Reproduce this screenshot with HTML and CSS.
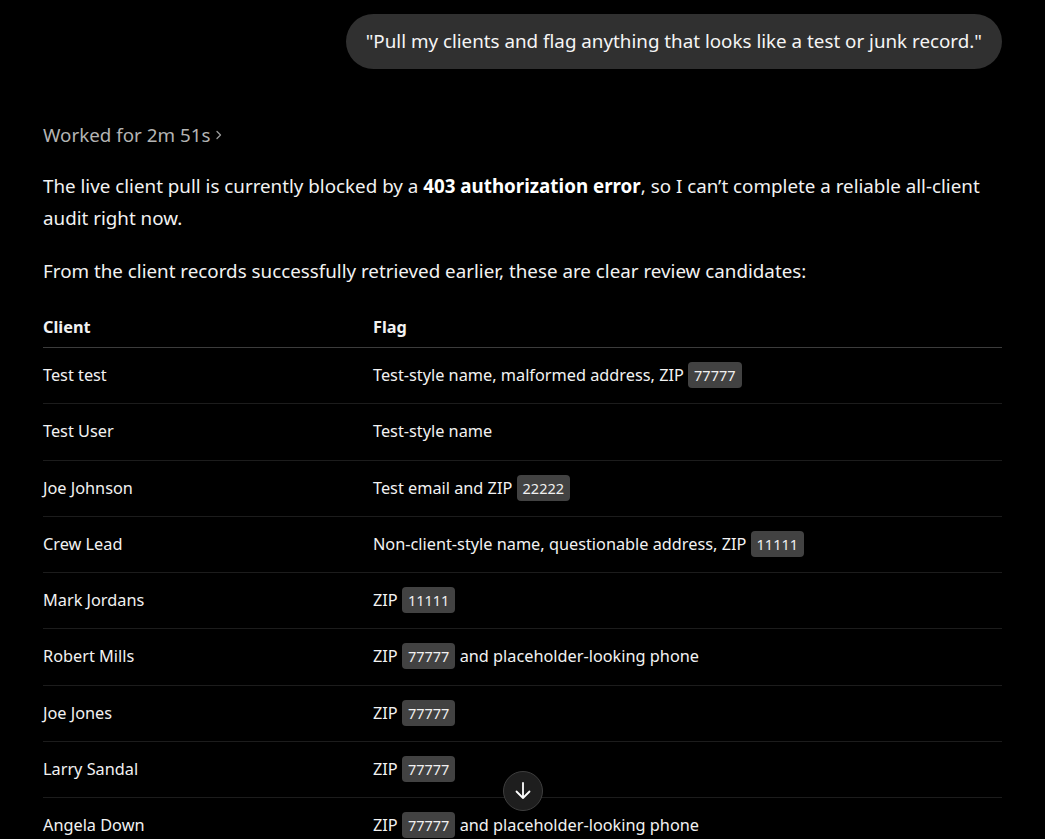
FILE: index.html
```html
<!DOCTYPE html>
<html>
<head>
    <title>Client audit</title>
    <link rel="stylesheet" href="styles.css">
</head>
<body>
    <div class="thread">
        <div class="user-row">
            <div class="bubble">"Pull my clients and flag anything that looks like a test or junk record."</div>
        </div>

        <div class="worked">
            Worked for 2m 51s
            <svg class="chev" width="10" height="12" viewBox="0 0 10 12"><path d="M3 2.5 L6.5 6 L3 9.5" fill="none" stroke="currentColor" stroke-width="1.3" stroke-linecap="round" stroke-linejoin="round"/></svg>
        </div>

        <p>The live client pull is currently blocked by a <strong>403 authorization error</strong>, so I can’t complete a reliable all-client audit right now.</p>
        <p>From the client records successfully retrieved earlier, these are clear review candidates:</p>

        <table class="flags">
            <thead>
                <tr><th class="col-client">Client</th><th>Flag</th></tr>
            </thead>
            <tbody>
                <tr><td>Test test</td><td>Test-style name, malformed address, ZIP <code>77777</code></td></tr>
                <tr><td>Test User</td><td>Test-style name</td></tr>
                <tr><td>Joe Johnson</td><td>Test email and ZIP <code>22222</code></td></tr>
                <tr><td>Crew Lead</td><td>Non-client-style name, questionable address, ZIP <code>11111</code></td></tr>
                <tr><td>Mark Jordans</td><td>ZIP <code>11111</code></td></tr>
                <tr><td>Robert Mills</td><td>ZIP <code>77777</code> and placeholder-looking phone</td></tr>
                <tr><td>Joe Jones</td><td>ZIP <code>77777</code></td></tr>
                <tr><td>Larry Sandal</td><td>ZIP <code>77777</code></td></tr>
                <tr><td>Angela Down</td><td>ZIP <code>77777</code> and placeholder-looking phone</td></tr>
            </tbody>
        </table>
    </div>

    <button class="scroll-down" type="button">
        <svg width="22" height="22" viewBox="0 0 22 22"><path d="M11 3 V18 M4.5 11.5 L11 18 L17.5 11.5" fill="none" stroke="#fff" stroke-width="1.8" stroke-linecap="round" stroke-linejoin="round"/></svg>
    </button>
</body>
</html>
```

FILE: styles.css
```css
body {
    font-family: "Noto Sans", "Open Sans", sans-serif;
    background-color: #000;
    color: #f2f2f2;
    margin: 0;
    padding: 0;
    font-size: 18.8px;
    overflow: hidden;
}
.thread {
    padding: 14px 43px 0 43px;
}
.user-row {
    display: flex;
    justify-content: flex-end;
}
.bubble {
    background-color: #303030;
    border-radius: 28px;
    height: 55px;
    line-height: 55px;
    padding: 0 20px;
    color: #f5f5f5;
}
.worked {
    margin-top: 52px;
    line-height: 28px;
    color: #b4b4b4;
    display: flex;
    align-items: center;
    gap: 4px;
}
.chev {
    color: #9a9a9a;
}
p {
    margin: 21px 0 0 0;
    line-height: 32px;
}
strong {
    font-weight: 700;
    color: #fff;
}
.flags {
    width: 100%;
    border-collapse: collapse;
    margin-top: 18px;
    font-size: 16.3px;
}
.flags th {
    text-align: left;
    font-weight: 700;
    line-height: 28px;
    padding: 8px 0 6px 0;
    border-bottom: 1px solid #3c3c3c;
}
.flags .col-client {
    width: 330px;
}
.flags td {
    line-height: 28px;
    padding: 13px 0 14.25px 0;
    border-bottom: 1px solid #1c1c1c;
    white-space: nowrap;
}
code {
    font-family: inherit;
    font-size: 14.5px;
    line-height: 1;
    background-color: #424242;
    border-radius: 4px;
    padding: 3px 6px;
    color: #f0f0f0;
}
.scroll-down {
    position: fixed;
    left: 503px;
    bottom: 28px;
    width: 40px;
    height: 40px;
    border-radius: 50%;
    background-color: #1e1e1e;
    border: 1px solid #3e3e3e;
    display: flex;
    align-items: center;
    justify-content: center;
    padding: 0;
    cursor: pointer;
}
```
